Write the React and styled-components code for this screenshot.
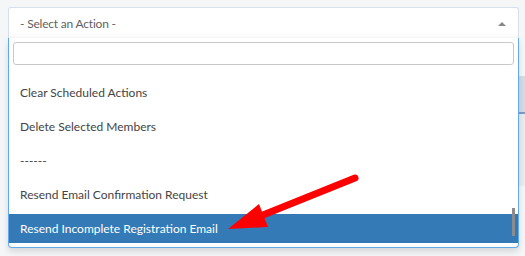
import React from 'react';
import styled, { createGlobalStyle } from 'styled-components';

const GlobalStyle = createGlobalStyle`
  html, body {
    margin: 0;
    padding: 0;
    background: #f4f6f8;
  }
  body {
    font-family: Lato, "Liberation Sans", sans-serif;
  }
`;

const Page = styled.div`
  position: relative;
  width: 525px;
  height: 256px;
  overflow: hidden;
  padding: 7px 0 0 8px;
  box-sizing: border-box;
`;

const Behind = styled.div`
  position: absolute;
  right: 0;
  top: 76px;
  width: 6px;
  height: 110px;
  display: flex;
  flex-direction: column;
`;

const BehindBlock = styled.div`
  height: ${p => p.h}px;
  background: ${p => p.bg};
`;

const SelectBox = styled.div`
  width: 511px;
  height: 31px;
  box-sizing: border-box;
  background: linear-gradient(#fff 0, #fff 80%, #f7f8f9 100%);
  border: 1px solid #d7dfe8;
  border-bottom: none;
  border-radius: 3px 3px 0 0;
  display: flex;
  align-items: center;
  justify-content: space-between;
  padding: 0 12px 0 11px;
  font-size: 12px;
  letter-spacing: -0.2px;
  color: #5f5f5f;
`;

const Caret = styled.span`
  width: 0;
  height: 0;
  border-style: solid;
  border-width: 0 4px 4px;
  border-color: transparent transparent #888;
  margin-top: 1px;
`;

const Dropdown = styled.div`
  position: absolute;
  left: 8px;
  top: 38px;
  width: 511px;
  height: 210px;
  box-sizing: border-box;
  background: #fff;
  border: 1px solid #62a8ec;
  border-top: none;
  border-radius: 0 0 4px 4px;
  box-shadow: 0 4px 6px rgba(0, 0, 0, 0.12);
  display: flex;
  flex-direction: column;
  overflow: hidden;
`;

const Search = styled.input`
  margin: 4px;
  height: 23px;
  box-sizing: border-box;
  border: 1px solid #c8c8c8;
  border-radius: 3px;
  outline: none;
`;

const List = styled.ul`
  list-style: none;
  margin: 0;
  padding: 9px 0 4px;
  display: flex;
  flex-direction: column;
  gap: 5px;
`;

const Option = styled.li`
  height: 29px;
  display: flex;
  align-items: center;
  padding-left: 11px;
  font-size: 12px;
  color: ${p => (p.active ? '#fff' : '#444')};
  background: ${p => (p.active ? '#337ab7' : 'transparent')};
`;

const ScrollThumb = styled.div`
  position: absolute;
  right: 3px;
  top: 170px;
  width: 3px;
  height: 28px;
  background: #8c8c8c;
`;

const Arrow = styled.svg`
  position: absolute;
  left: 0;
  top: 0;
  pointer-events: none;
`;

const options = [
  'Clear Scheduled Actions',
  'Delete Selected Members',
  '------',
  'Resend Email Confirmation Request',
  'Resend Incomplete Registration Email',
];

export default function App() {
  return (
    <Page>
      <GlobalStyle />
      <Behind>
        <BehindBlock h={36} bg="#d3dbe5" />
        <BehindBlock h={2} bg="#7d9dc6" />
        <BehindBlock h={72} bg="#e9ecef" />
      </Behind>
      <SelectBox>
        <span>- Select an Action -</span>
        <Caret />
      </SelectBox>
      <Dropdown>
        <Search type="text" />
        <List>
          {options.map((o, i) => (
            <Option key={o} active={i === options.length - 1}>{o}</Option>
          ))}
        </List>
        <ScrollThumb />
      </Dropdown>
      <Arrow width="525" height="256" viewBox="0 0 525 256">
        <line x1="355" y1="178" x2="258" y2="217" stroke="#ff0000" strokeWidth="7" strokeLinecap="round" />
        <polygon points="228,229 259,204 268,227" fill="#ff0000" />
      </Arrow>
    </Page>
  );
}
